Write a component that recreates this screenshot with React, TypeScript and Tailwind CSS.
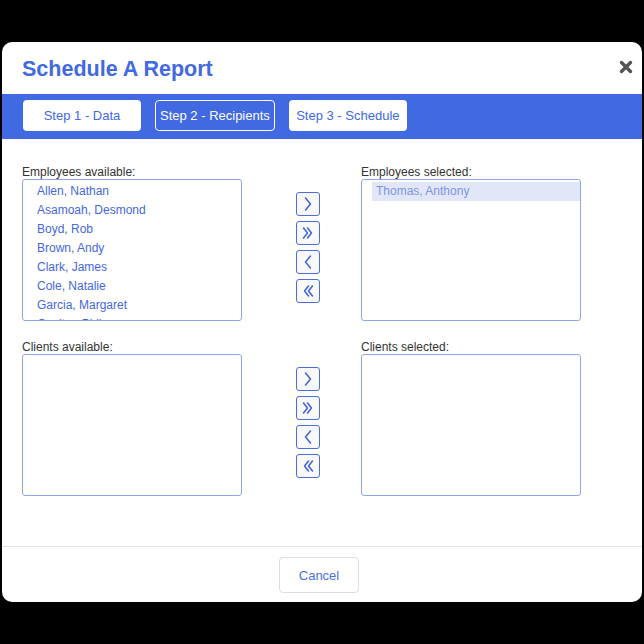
import React from "react";

const employeesAvailable = [
  "Allen, Nathan",
  "Asamoah, Desmond",
  "Boyd, Rob",
  "Brown, Andy",
  "Clark, James",
  "Cole, Natalie",
  "Garcia, Margaret",
  "Coulter, Phil",
  "Davis, Helen",
];

const employeesSelected = ["Thomas, Anthony"];

type Dir = "right" | "allRight" | "left" | "allLeft";

function Chevron({ dir }: { dir: Dir }) {
  const paths: Record<Dir, string[]> = {
    right: ["M8.5 5 L13.5 11 L8.5 17"],
    allRight: ["M6.5 6 L10.5 11 L6.5 16", "M10.5 6 L14.5 11 L10.5 16"],
    left: ["M13.5 5 L8.5 11 L13.5 17"],
    allLeft: ["M11.5 6 L7.5 11 L11.5 16", "M15.5 6 L11.5 11 L15.5 16"],
  };
  return (
    <svg width="22" height="22" viewBox="0 0 22 22" fill="none">
      {paths[dir].map((d, i) => (
        <path key={i} d={d} stroke="#3f63d8" strokeWidth="1.5" strokeLinecap="round" strokeLinejoin="round" />
      ))}
    </svg>
  );
}

function MoveButtons() {
  const dirs: Dir[] = ["right", "allRight", "left", "allLeft"];
  return (
    <div className="w-[119px] pt-[28px] pl-[54px] flex flex-col gap-[5px]">
      {dirs.map((d) => (
        <button
          key={d}
          className="w-[24px] h-[24px] border border-[#4a6fdc] rounded-[3px] bg-[#f9f9fb] flex items-center justify-center p-0"
        >
          <Chevron dir={d} />
        </button>
      ))}
    </div>
  );
}

function ListBox({ label, items, selected }: { label: string; items: string[]; selected?: string }) {
  return (
    <div className="w-[220px] flex flex-col">
      <div className="text-[12px] leading-[17px] text-[#333] h-[15px]">{label}</div>
      <div className="h-[142px] border border-[#8fa6ea] rounded-[3px] bg-white overflow-hidden">
        <ul className="pt-[2px] pl-[10px]">
          {items.map((it) => (
            <li
              key={it}
              className={
                "h-[19px] leading-[19px] pl-[4px] text-[12px] whitespace-nowrap " +
                (it === selected ? "bg-[#e1e7f8] text-[#7f95e6]" : "text-[#4568e0]")
              }
            >
              {it}
            </li>
          ))}
        </ul>
      </div>
    </div>
  );
}

export default function App() {
  return (
    <div
      className="w-[644px] h-[644px] bg-black overflow-hidden"
      style={{ fontFamily: '"Liberation Sans", Arial, sans-serif' }}
    >
      <div className="ml-[2px] mt-[42px] w-[640px] h-[560px] bg-white rounded-[10px] flex flex-col overflow-hidden">
        {/* header */}
        <div className="h-[52px] pl-[20px] pr-[9px] flex items-center justify-between">
          <h1 className="text-[21.5px] font-bold text-[#4169e1] leading-none pt-[4px]">Schedule A Report</h1>
          <svg width="14" height="14" viewBox="0 0 14 14" className="mt-[-2px]">
            <path d="M2.5 2.5 L11.5 11.5 M11.5 2.5 L2.5 11.5" stroke="#555" strokeWidth="3.4" strokeLinecap="round" />
          </svg>
        </div>

        {/* step tabs */}
        <div className="h-[45px] bg-[#4169e1] pl-[21px] pt-[6px] flex items-start gap-[14px]">
          <button className="h-[31px] min-w-[118px] px-[5px] rounded-[4px] bg-white text-[#4169e1] text-[13px]">
            Step 1 - Data
          </button>
          <button className="h-[31px] min-w-[118px] px-[4px] rounded-[4px] border border-white text-white text-[13px]">
            Step 2 - Recipients
          </button>
          <button className="h-[31px] min-w-[118px] px-[5px] rounded-[4px] bg-white text-[#4169e1] text-[13px]">
            Step 3 - Schedule
          </button>
        </div>

        {/* pickers */}
        <div className="flex-1 pt-[25px] pl-[20px] flex flex-col gap-[18px]">
          <div className="flex">
            <ListBox label="Employees available:" items={employeesAvailable} />
            <MoveButtons />
            <ListBox label="Employees selected:" items={employeesSelected} selected="Thomas, Anthony" />
          </div>
          <div className="flex">
            <ListBox label="Clients available:" items={[]} />
            <MoveButtons />
            <ListBox label="Clients selected:" items={[]} />
          </div>
        </div>

        {/* footer */}
        <div className="h-[56px] border-t border-[#e5e5e5] flex justify-center pt-[10px] pr-[6px]">
          <button className="w-[80px] h-[36px] pt-[2px] border border-[#dddddd] rounded-[4px] bg-white text-[#4a6fe3] text-[13px]">
            Cancel
          </button>
        </div>
      </div>
    </div>
  );
}
